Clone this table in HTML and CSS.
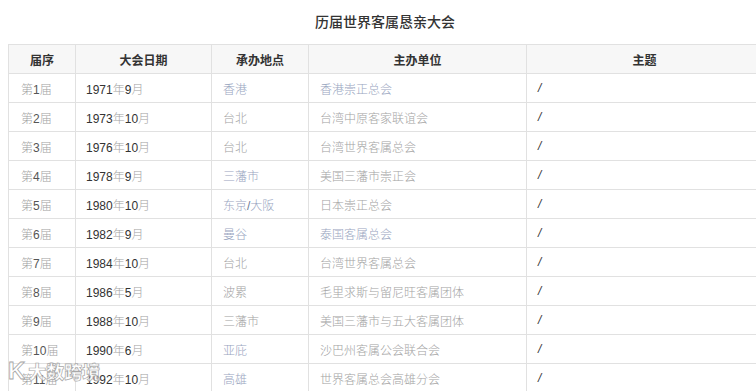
FILE: index.html
```html
<!DOCTYPE html>
<html lang="zh-CN">
<head>
<meta charset="utf-8">
<title>历届世界客属恳亲大会</title>
<link rel="stylesheet" href="styles.css">
</head>
<body>
<div class="page">
  <h1 class="title">历届世界客属恳亲大会</h1>
  <table class="tbl">
    <colgroup>
      <col class="c1"><col class="c2"><col class="c3"><col class="c4"><col class="c5">
    </colgroup>
    <thead>
      <tr><th>届序</th><th>大会日期</th><th>承办地点</th><th>主办单位</th><th>主题</th></tr>
    </thead>
    <tbody>
      <tr><td class="g">第<b>1</b>届</td><td><b>1971</b><span class="g">年</span><b>9</b><span class="g">月</span></td><td class="lk">香港</td><td class="lk">香港崇正总会</td><td class="sl">/</td></tr>
      <tr><td class="g">第<b>2</b>届</td><td><b>1973</b><span class="g">年</span><b>10</b><span class="g">月</span></td><td class="g">台北</td><td class="g">台湾中原客家联谊会</td><td class="sl">/</td></tr>
      <tr><td class="g">第<b>3</b>届</td><td><b>1976</b><span class="g">年</span><b>10</b><span class="g">月</span></td><td class="g">台北</td><td class="g">台湾世界客属总会</td><td class="sl">/</td></tr>
      <tr><td class="g">第<b>4</b>届</td><td><b>1978</b><span class="g">年</span><b>9</b><span class="g">月</span></td><td class="lk">三藩市</td><td class="g">美国三藩市崇正会</td><td class="sl">/</td></tr>
      <tr><td class="g">第<b>5</b>届</td><td><b>1980</b><span class="g">年</span><b>10</b><span class="g">月</span></td><td class="lk">东京<b>/</b>大阪</td><td class="g">日本崇正总会</td><td class="sl">/</td></tr>
      <tr><td class="g">第<b>6</b>届</td><td><b>1982</b><span class="g">年</span><b>9</b><span class="g">月</span></td><td class="lk">曼谷</td><td class="lk">泰国客属总会</td><td class="sl">/</td></tr>
      <tr><td class="g">第<b>7</b>届</td><td><b>1984</b><span class="g">年</span><b>10</b><span class="g">月</span></td><td class="g">台北</td><td class="g">台湾世界客属总会</td><td class="sl">/</td></tr>
      <tr><td class="g">第<b>8</b>届</td><td><b>1986</b><span class="g">年</span><b>5</b><span class="g">月</span></td><td class="g">波累</td><td class="g">毛里求斯与留尼旺客属团体</td><td class="sl">/</td></tr>
      <tr><td class="g">第<b>9</b>届</td><td><b>1988</b><span class="g">年</span><b>10</b><span class="g">月</span></td><td class="g">三藩市</td><td class="g">美国三藩市与五大客属团体</td><td class="sl">/</td></tr>
      <tr><td class="g">第<b>10</b>届</td><td><b>1990</b><span class="g">年</span><b>6</b><span class="g">月</span></td><td class="lk">亚庇</td><td class="g">沙巴州客属公会联合会</td><td class="sl">/</td></tr>
      <tr><td class="g">第<b>11</b>届</td><td><b>1992</b><span class="g">年</span><b>10</b><span class="g">月</span></td><td class="lk">高雄</td><td class="g">世界客属总会高雄分会</td><td class="sl">/</td></tr>
    </tbody>
  </table>
  <div class="watermark" aria-hidden="true"><span class="wm-k">K</span><span class="wm-t">大数跨境</span></div>
</div>
</body>
</html>
```

FILE: styles.css
```css
html, body {
  margin: 0;
  padding: 0;
  background: #fff;
  overflow: hidden;
}
body {
  font-family: "Liberation Sans", "Noto Sans CJK SC", sans-serif;
  font-size: 12px;
  color: #333;
}
.page {
  position: relative;
  width: 754px;
  margin-left: 8px;
  padding-top: 13px;
}
.title {
  margin: 0 0 14px 0;
  text-align: center;
  font-family: "Noto Sans CJK SC", sans-serif;
  font-size: 14px;
  font-weight: 500;
  line-height: 17px;
  color: #333;
}
.tbl {
  border-collapse: collapse;
  table-layout: fixed;
  width: 754px;
}
.c1 { width: 67px; }
.c2 { width: 136px; }
.c3 { width: 97px; }
.c4 { width: 218px; }
.c5 { width: 236px; }
.tbl th, .tbl td {
  border: 1px solid #e1e1e1;
  padding: 0 0 0 11px;
  box-sizing: border-box;
  white-space: nowrap;
  overflow: hidden;
}
.tbl th {
  height: 29px;
  background: #f7f7f7;
  padding: 0;
  text-align: center;
  font-family: "Noto Sans CJK SC", sans-serif;
  font-weight: 700;
  font-size: 12px;
  color: #333;
}
.tbl td {
  height: 29px;
  font-family: "Liberation Sans", "Noto Sans CJK SC", sans-serif;
  font-weight: 300;
  color: #333;
}
.tbl td:first-child { padding-left: 12px; }
.tbl td:nth-child(2) { padding-left: 10px; }
.tbl b { font-weight: normal; color: #333; }
.tbl .g { color: #a3a3a3; }
.tbl td.g b { color: #555; }
.tbl .lk { color: #98a5c0; }
.tbl td.lk b { color: #6c7a98; }
.tbl .sl { color: #333; font-style: italic; font-weight: normal; }
.watermark {
  position: absolute;
  left: 0;
  top: 357px;
  display: flex;
  align-items: center;
  gap: 3px;
  pointer-events: none;
}
.wm-k {
  font-family: "Liberation Sans", sans-serif;
  font-size: 24px;
  font-weight: 700;
  color: rgba(255,255,255,0.75);
  -webkit-text-stroke: 0.8px #a5a5a5;
}
.wm-t {
  font-family: "Noto Sans CJK SC", sans-serif;
  font-size: 18px;
  font-weight: 900;
  color: rgba(255,255,255,0.7);
  -webkit-text-stroke: 0.7px #a8a8a8;
}
```
